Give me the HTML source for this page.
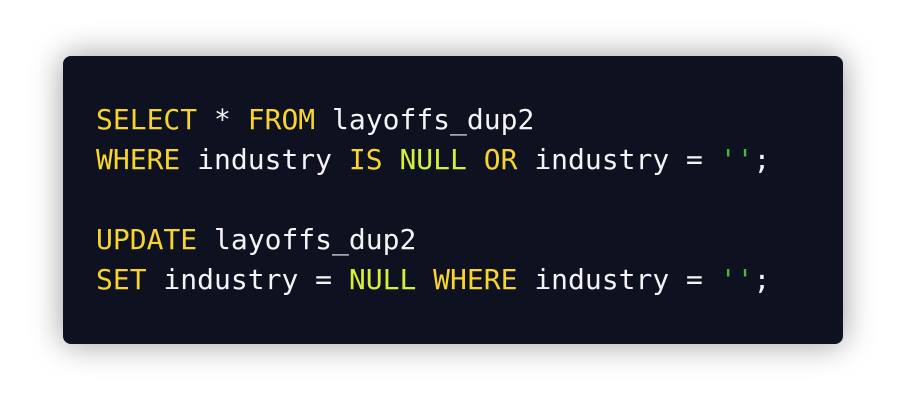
<!DOCTYPE html>
<html><head><style>
html,body{margin:0;padding:0;width:906px;height:400px;background:#fff;overflow:hidden}
.box{position:absolute;left:63px;top:56px;width:780px;height:288px;background:#0e1120;border-radius:8px;box-shadow:0 0 32px rgba(0,0,0,0.4)}
pre{position:absolute;left:96px;top:100px;margin:0;font-family:"DejaVu Sans Mono","Liberation Mono",monospace;font-size:28px;line-height:40px;color:#f4f4f6}
.k{color:#f8d52e}.n{color:#d5f03b}.s{color:#49b93c}
</style></head><body>
<div class="box"></div>
<pre><span class="k">SELECT</span> * <span class="k">FROM</span> layoffs_dup2
<span class="k">WHERE</span> industry <span class="k">IS</span> <span class="n">NULL</span> <span class="k">OR</span> industry = <span class="s">''</span>;

<span class="k">UPDATE</span> layoffs_dup2
<span class="k">SET</span> industry = <span class="n">NULL</span> <span class="k">WHERE</span> industry = <span class="s">''</span>;</pre>
</body></html>
